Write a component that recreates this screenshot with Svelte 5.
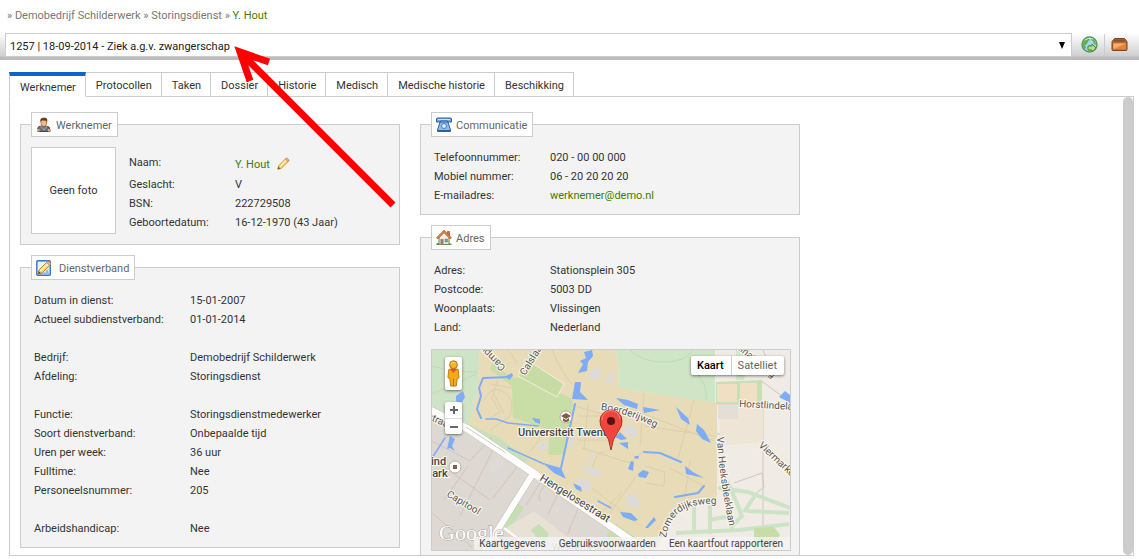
<script>
  let activeTab = $state('Werknemer');
  let mapType = $state('Kaart');
  let scale = $state(1);

  const tabs = ['Werknemer', 'Protocollen', 'Taken', 'Dossier', 'Historie', 'Medisch', 'Medische historie', 'Beschikking'];

  // null is an empty line between groups
  const employment = [
    ['Datum in dienst:', '15-01-2007'],
    ['Actueel subdienstverband:', '01-01-2014'],
    null,
    ['Bedrijf:', 'Demobedrijf Schilderwerk'],
    ['Afdeling:', 'Storingsdienst'],
    null,
    ['Functie:', 'Storingsdienstmedewerker'],
    ['Soort dienstverband:', 'Onbepaalde tijd'],
    ['Uren per week:', '36 uur'],
    ['Fulltime:', 'Nee'],
    ['Personeelsnummer:', '205'],
    null,
    ['Arbeidshandicap:', 'Nee']
  ];

  const address = [
    ['Adres:', 'Stationsplein 305'],
    ['Postcode:', '5003 DD'],
    ['Woonplaats:', 'Vlissingen'],
    ['Land:', 'Nederland']
  ];
</script>

{#snippet pencil()}
  <path d="M2 14l1-4L11 2q1-1 2 0l1 1q1 1 0 2L6 13z" fill="#fbd569" stroke="#c78a32" />
  <path d="M4.500 11L12 3.500" stroke="#fff3bd" stroke-width="1.500" />
  <path d="M10.500 2.500l3 3L14.500 4.500q.5-1-.5-2l-1-1q-1-.5-1.500 0z" fill="#f0a88c" stroke="#b98262" stroke-width=".7" />
  <path d="M2 14l.8-3 2.200 2.200z" fill="#6b4a2c" />
{/snippet}

<div class="page">
  <nav class="breadcrumb">
    » <a href="#bedrijf">Demobedrijf Schilderwerk</a> » <a href="#afdeling">Storingsdienst</a> » <a class="green" href="#werknemer">Y. Hout</a>
  </nav>

  <div class="toolbar">
    <div class="picker">
      <select aria-label="Verzuimdossier">
        <option>1257 | 18-09-2014 - Ziek a.g.v. zwangerschap</option>
      </select>
      <svg class="caret" width="6" height="7" viewBox="0 0 6 7"><path d="M0 0h6L3 7z" fill="#000" /></svg>
    </div>
    <button class="tool" aria-label="Openen">
      <svg width="18" height="18" viewBox="0 0 18 18">
        <circle cx="8.500" cy="8.500" r="7.500" fill="#a8d3ee" stroke="#529a50" stroke-width="1.400" />
        <path d="M2 7q2-5 6-5l1 2-2 1-1 3-2 1 1 3-1 1Q1 11 2 7zM10 2q5 2 5 7l-2-1-1-3-2-1zM7 10l3-1 1 3-2 3-2-1z" fill="#60ae54" />
        <path d="M4 4q4-3 8-1" stroke="#fff" stroke-opacity=".7" fill="none" />
        <path d="M7 10h4V8l4 4-4 4v-2H7z" fill="#b4dd84" stroke="#41883b" />
      </svg>
    </button>
    <button class="tool last" aria-label="Dossiermap">
      <svg width="18" height="16" viewBox="0 0 18 16">
        <path d="M3.500 1.500h10l2.500 3v8q0 1-1 1h-13q-1 0-1-1v-8z" fill="#ad6a3b" stroke="#7d4722" />
        <path d="M4 2.500h9l1.500 2h-12z" fill="#8c5128" />
        <path d="M2 6h13v6.500H2z" fill="#e5843b" />
        <path d="M2.500 6.500h12L2.500 12z" fill="#f6ae72" />
      </svg>
    </button>
  </div>

  <div class="tabs" role="tablist">
    {#each tabs as tab}
      <button role="tab" class:active={tab === activeTab} aria-selected={tab === activeTab} onclick={() => (activeTab = tab)}>{tab}</button>
    {/each}
  </div>

  <main class="content">
    <div class="columns">
      <div class="column">
        <fieldset>
          <legend>
            <svg width="16" height="16" viewBox="0 0 16 16">
              <path d="M1.500 13q0-4 3.500-4h5q4 0 4 4v1.500H1.500z" fill="#6e7178" stroke="#44474e" />
              <path d="M4.500 9l3.500 4 3-4" stroke="#a9adb5" fill="none" />
              <path d="M5 3.500h5.500V7q-.5 2.500-2.700 2.500T5 7z" fill="#f0b98a" stroke="#9c5c30" stroke-width=".7" />
              <path d="M4.500 5Q3.500 1 7 .7h2.500q2.500.8 1.500 4.800l-1-2-4-.5-1 1.500z" fill="#6a3a1d" />
              <path d="M1 12h2.500v2.500H1zM12 12h2.500v2.500H12z" fill="#e8a773" />
            </svg>
            <span>Werknemer</span>
          </legend>
          <div class="person">
            <div class="photo">Geen foto</div>
            <dl class="person-data">
              <div class="name-row">
                <dt>Naam:</dt>
                <dd>
                  <a class="green" href="#naam">Y. Hout</a>
                  <button class="edit" aria-label="Naam wijzigen">
                    <svg width="14" height="14" viewBox="0 0 16 16" fill="none">{@render pencil()}</svg>
                  </button>
                </dd>
              </div>
              <div><dt>Geslacht:</dt><dd>V</dd></div>
              <div><dt>BSN:</dt><dd>222729508</dd></div>
              <div><dt>Geboortedatum:</dt><dd>16-12-1970 (43 Jaar)</dd></div>
            </dl>
          </div>
        </fieldset>

        <fieldset>
          <legend>
            <svg width="16" height="16" viewBox="0 0 16 16" fill="none">
              <rect x=".8" y=".8" width="13.500" height="14.400" rx="1" fill="#cfe5fa" stroke="#3b77c5" stroke-width="1.400" />
              <path d="M2 2h11v4L5 14H2z" fill="#e9f4ff" />
              <path d="M5 13.500h8M11 10v3" stroke="#8fbdec" stroke-width="2" />
              {@render pencil()}
            </svg>
            <span class="wide">Dienstverband</span>
          </legend>
          <dl class="employment">
            {#each employment as row}
              {#if row}
                <div><dt>{row[0]}</dt><dd>{row[1]}</dd></div>
              {:else}
                <div class="blank"></div>
              {/if}
            {/each}
          </dl>
        </fieldset>
      </div>

      <div class="column">
        <fieldset>
          <legend>
            <svg width="16" height="16" viewBox="0 0 16 16">
              <path d="M.5 5V2q0-1 1-1h13q1 0 1 1v3h-4V4h-7v1z" fill="#74a7e3" stroke="#355f9f" />
              <path d="M4 5h8l2.500 8v1.500h-13V13z" fill="#8cb9ee" stroke="#355f9f" />
              <path d="M2 2.500h12" stroke="#cfe3fa" />
              <circle cx="8" cy="9" r="2.500" fill="#dcebfb" stroke="#4c7dbd" />
              <path d="M2 13.500h12" stroke="#365d96" />
            </svg>
            <span>Communicatie</span>
          </legend>
          <dl class="contact">
            <div><dt>Telefoonnummer:</dt><dd>020 - 00 00 000</dd></div>
            <div><dt>Mobiel nummer:</dt><dd>06 - 20 20 20 20</dd></div>
            <div><dt>E-mailadres:</dt><dd><a class="green" href="mailto:werknemer@demo.nl">werknemer@demo.nl</a></dd></div>
          </dl>
        </fieldset>

        <fieldset class="location">
          <legend>
            <svg width="16" height="16" viewBox="0 0 16 16">
              <path d="M3 7l5-5 5 5v7.500H3z" fill="#f2eee4" stroke="#847461" />
              <path d="M11.500 1.500h2V6l-2-2z" fill="#cd7046" stroke="#8c4425" stroke-width=".6" />
              <path d="M1 8.500L8 1.500l7 7" stroke="#b35c23" stroke-width="2.400" fill="none" />
              <path d="M1.500 8L8 1.500 14.500 8" stroke="#f2a95d" stroke-width="1" fill="none" />
              <path d="M4.500 9h3v6h-3z" fill="#8f8376" />
              <path d="M9 9h2.500v3H9z" fill="#79a5ce" stroke="#6b6b6b" stroke-width=".5" />
              <path d="M0 15q1-3 3-2l1 2zM9 15q1-2 3-1 3-2 4 1z" fill="#4fa33d" />
            </svg>
            <span>Adres</span>
          </legend>
          <dl class="contact">
            {#each address as [label, value]}
              <div><dt>{label}</dt><dd>{value}</dd></div>
            {/each}
          </dl>

          <div class="map">
            <svg class="tiles" class:satellite={mapType === 'Satelliet'} viewBox="0 0 358 200" preserveAspectRatio="xMidYMid slice" style:transform="scale({scale})">
              <rect width="358" height="200" fill="#f0ece5" />
              <path d="M0 0H48L45 45 36 79 0 61z" fill="#cfe3c7" />
              <path d="M0 16q20 6 46 6M0 44l44-20" stroke="#c1d9b8" fill="none" />
              <path d="M48 0H183Q188 14 186 38L285 53V150L253 154 238 166 226 198H210L100 123 36 78 45 45z" fill="#e8dcb8" />
              <path d="M183 0H283V53L186 38Q188 14 183 0z" fill="#cfe5c6" />
              <path d="M198 0q12 12 34 12t28-12M262 20q14 14 12 30" stroke="#bddbb5" fill="none" />
              <path d="M0 61L36 79 100 122 210 198V200H0z" fill="#ddd8d1" />
              <path d="M36 74L66 87 98 111 93 113 36 83z" fill="#c9dfb9" />
              <!-- campus greens -->
              <path d="M62 6L72 22 81 28 92 27 139 48 141 53 133 105H116L118 80 81 68 80 36 58 20z" fill="#c9dea7" />
              <path d="M92 14L100 13 132 34 125 47 86 26z" fill="#c6dca4" stroke="#f4eedc" />
              <path d="M175 184l9-10 26 18v8h-35z" fill="#c9dea7" />
              <path d="M92 158L76 181 71 178 86 153z" fill="#c5dfb3" />
              <path d="M72 179l30-18 40 31-4 8H96z" fill="#e8e1d6" />
              <path d="M99 180l8-6 10 10-4 7-8-3z" fill="#c5dfb3" />
              <!-- minor streets -->
              <g fill="none" stroke="#dccfa9" stroke-width="1">
                <path d="M52 50q8-16 20-8t6 24l-20 14M58 34l22 4M60 40l12 24M76 0l10 14M120 0q10 24 20 34M66 30l-6 18 8 14-10 6M96 104l14-18 6-4" />
                <path d="M140 55l46 14 18-8 78 30M212 43l-4 54M262 50l-16 58M146 66h26M145 90h36M156 54l-4 46M212 76l70 10M150 98l48 15 14-12M160 120q4-20 12-18M204 126l-32 46M213 116l20 6-1 14-18-3M258 110l-6 44M238 118l34 18M190 142l-20 20M148 128l60 48" />
              </g>
              <g fill="none" stroke="#cdc6be">
                <path d="M0 91l38 20 22-24M0 108l58 42M36 116l-24 34M62 98L28 166M72 104l16 9-28 36M110 130l-16 25M118 131q-14 10-10 20M130 136l-14 28M150 149l-14 34M0 163l40 34" />
                <path d="M285 84l38-3M331 58v142M302 133l28-10 2 14-10 8M328 30l30 22M331 0l10 24M285 54h73" />
              </g>
              <g fill="#dedad8">
                <path d="M194 73l12 6-4 11-10-8zM162 17l9 4-6 10-9-5zM180 21l4 2-6 12-5-3zM197 143l13 7-5 9-12-7zM105 95l8-4 3 5-5 7zM58 111l9-4 6 6-9 12-8-5zM147 127l14 6-4 8-13-6zM154 115l17 7-5 6-15-7zM137 88l5 1-1 8-5-1zM158 102h4l-1 10h-3zM124 156l5 1-1 6-5-1z" />
              </g>
              <!-- east side blocks -->
              <path d="M288 58h43v34l-43 4z" fill="#efe5d6" />
              <path d="M284 32l46-2v24h-46z" fill="#c6dfb5" />
              <path d="M285 34h20v18h-20zM308 33h17v19h-17z" fill="#f0dfc3" />
              <path d="M286 55h20v14h-20z" fill="#e4ded7" />
              <path d="M304 0h14l-6 30h-8z" fill="#d3e6c8" />
              <g fill="none" stroke="#cce3c6" stroke-width="4">
                <path d="M262 152v29M278 150v34M244 183l63-3 50-6M286 138l30 4 42 16M296 132l14 34-12 12M315 161l42 2M312 162l12-18M276 170l24-4" />
              </g>
              <path d="M322 178l20-1 6 8-6 15h-20z" fill="#c7dda8" />
              <!-- water -->
              <g fill="none" stroke="#7eacf6" stroke-linecap="round" stroke-linejoin="round">
                <path d="M78 27L51 28l-4 10 2 8-4 13 4 9" stroke-width="2" />
                <path d="M54 69l10 0 12 4 30 3M76 98l36 16M166 151l13 7M0 108l13-20" stroke-width="1.500" />
                <path d="M143 54l-14 64M212 102l16 1 21 9M243 147l23-4 6-7" stroke-width="2" />
              </g>
              <g fill="#7eacf6">
                <path d="M74 26l6-3 1 3-4 4zM152 2l8-2 1 6-5 6-1 9-9 2 5-9-3-3 6-3zM143 32l6 0-1 10 8 8-16-1zM24 46l7-5 2 6-4 7-5-3zM100 68l8 1 0 5-5-2zM18 86l5 3-3 7 3 5-5-3-3 1zM184 48l12 2 10 4-1 5-13-4zM211 57l17 3-16 3zM244 57l12 11 2 7-9-6zM265 74l7 6 7 13-9-4-6-8zM183 87l5-5 7 7-6 1zM187 93l9-1v7zM111 113l18 5 5 11-12-6zM141 133l8 4 1 5-6-3zM253 116l8 6 11 6-18-4zM206 124l5-4 6 2-3 6-7-1zM199 111l3 1-1 9-5-2zM203 106l4 0-1 3-4-1zM188 162l11 1 7 7-4 1-11-4zM213 178l9-11 2 3-8 8zM347 47l6-6 5 4v8z" />
              </g>
              <!-- main roads -->
              <g fill="none" stroke="#c5c1b7" stroke-linejoin="round">
                <path d="M-2 60L36 79 100 122 216 202" stroke-width="8" />
                <path d="M102 122L65 181 52 202" stroke-width="7" />
              </g>
              <g fill="none" stroke="#fff" stroke-linejoin="round">
                <path d="M-2 60L36 79 100 122 216 202" stroke-width="7" />
                <path d="M102 122L65 181 52 202" stroke-width="6" />
                <path d="M72 178l26 20" stroke-width="2" />
              </g>
              <path d="M34 77l40 26" stroke="#cdcac4" stroke-width="1" />
              <defs>
                <path id="boerderijweg" d="M169 60Q195 62 232 82" />
                <path id="zomerdijksweg" d="M234 188Q239 152 284 154" />
                <path id="heeksbleeklaan" d="M285 87Q287 130 299 184" />
              </defs>
              <g class="labels">
                <text transform="translate(74 17) rotate(-135)">Campus</text>
                <text transform="translate(93 26) rotate(-58)">Calslaan</text>
                <text text-anchor="end" transform="translate(18 79) rotate(24)">Auke Vleerstraat</text>
                <text><textPath href="#boerderijweg">Boerderijweg</textPath></text>
                <text transform="translate(14 146) rotate(31)">Capitool</text>
                <text class="main" transform="translate(107 130) rotate(32)">Hengelosestraat</text>
                <text><textPath href="#zomerdijksweg">Zomerdijksweg</textPath></text>
                <text><textPath href="#heeksbleeklaan">Van Heeksbleeklaan</textPath></text>
                <text transform="translate(307 57) rotate(3)">Horstlindelaan</text>
                <text transform="translate(326 96) rotate(43)">Viermarken</text>
                <text x="-22" transform="translate(309 2) rotate(40)">Destinatieweg</text>
                <text class="place" x="86" y="86">Universiteit Twente</text>
                <text class="place" x="-8" y="115">Kind</text>
                <text class="place" x="-6" y="127">park</text>
                <text class="faint" x="120" y="201">Westerbegraafplaats</text>
                <text class="google" x="7" y="190">Google</text>
              </g>
              <circle cx="134" cy="67" r="6" fill="#fff" stroke="#b9aa94" />
              <path d="M129 66l5-3 5 3-5 3zM131 68v3q3 2 6 0v-3l-3 2z" fill="#806044" />
              <circle cx="23" cy="117" r="6" fill="#fff" stroke="#b9b0a5" />
              <path d="M21 115h4v4h-4z" fill="#866044" />
              <path d="M179 100Q178 89 171 80 168 76 168 71A11 11 0 0 1 190 71Q190 76 187 80 180 89 179 100z" fill="#ee463d" stroke="#a92a24" />
              <path d="M170 70a9 9 0 0 1 18-1" stroke="#ff8a80" fill="none" />
              <circle cx="179" cy="71" r="4" fill="#5b120e" />
            </svg>

            <button class="map-box pegman" aria-label="Street View">
              <svg width="13" height="30" viewBox="0 0 14 30">
                <path d="M2 10q5-2 10 0l1 9-2 1-1 8H4l-1-8-2-1z" fill="#f5a914" stroke="#b87b0e" />
                <circle cx="7" cy="5" r="4.200" fill="#f7b327" stroke="#a86c0d" />
                <path d="M3.500 9.500h7L7 14z" fill="#e74b3a" />
                <path d="M7 20v8" stroke="#ae730c" />
                <path d="M4 4q2-3 5-1" stroke="#ffe07a" fill="none" />
              </svg>
            </button>
            <div class="map-box zoom">
              <button aria-label="Inzoomen" onclick={() => (scale = Math.min(3, scale + 1))}>
                <svg width="8" height="8" viewBox="0 0 8 8"><path d="M0 4h8M4 0v8" stroke="#666" stroke-width="2" /></svg>
              </button>
              <button aria-label="Uitzoomen" onclick={() => (scale = Math.max(1, scale - 1))}>
                <svg width="8" height="8" viewBox="0 0 8 8"><path d="M0 4h8" stroke="#666" stroke-width="2" /></svg>
              </button>
            </div>
            <div class="map-box types">
              {#each ['Kaart', 'Satelliet'] as type}
                <button class:chosen={type === mapType} onclick={() => (mapType = type)}>{type}</button>
              {/each}
            </div>
            <div class="credits">
              <a href="#gegevens">Kaartgegevens</a>
              <a href="#voorwaarden">Gebruiksvoorwaarden</a>
              <a href="#fout">Een kaartfout rapporteren</a>
            </div>
          </div>
        </fieldset>
      </div>
    </div>
    <div class="scrollbar"></div>
  </main>

  <svg class="pointer" width="164" height="164" viewBox="0 0 164 164">
    <path d="M8 8L159 159M35 16L6 6 16 35" fill="none" stroke="#f00" stroke-width="7" />
  </svg>
</div>

<style>
  :global(body) {
    background: #fff;
    color: #333;
    font: 11px/19px Tahoma, Roboto, sans-serif;
  }

  .page {
    position: relative;
    display: flex;
    flex-direction: column;
    height: 100vh;
    box-sizing: border-box;
    padding-bottom: 3px;
    overflow: hidden;
  }

  button,
  select {
    font: inherit;
    color: inherit;
  }

  button {
    margin: 0;
    padding: 0;
    border: 0;
    background: none;
    cursor: pointer;
  }

  svg {
    display: block;
    flex-shrink: 0;
  }

  a {
    color: inherit;
    text-decoration: none;
  }

  a.green {
    color: #3f7d00;
  }

  .breadcrumb {
    padding: 6px 7px 8px;
    color: #777;
  }

  .toolbar {
    display: flex;
    align-items: center;
    height: 24px;
    padding: 0 10px 3px 5px;
    background: linear-gradient(#fff, #cfcfd1 23px, #bcbcbc 24px, #bcbcbc);
  }

  .picker {
    position: relative;
    flex: 1;
    margin-right: 9px;
  }

  .picker select {
    display: block;
    width: 100%;
    height: 24px;
    padding: 2px 4px 0;
    border: 1px solid #ccc;
    border-radius: 0;
    background: #fff;
    color: #222;
    appearance: none;
  }

  .caret {
    position: absolute;
    top: 9px;
    right: 7px;
    pointer-events: none;
  }

  .tool {
    display: flex;
    align-items: center;
    height: 22px;
  }

  .tool.last {
    margin-left: 5px;
    padding-left: 6px;
    border-left: 1px solid #ccc;
  }

  .tabs {
    display: flex;
    padding: 12px 9px 0;
  }

  .tabs button {
    position: relative;
    z-index: 1;
    height: 25px;
    padding: 2px 9px 0 10px;
    border: solid #ccc;
    border-width: 1px 1px 1px 0;
  }

  .tabs button.active {
    border-top: 4px solid #0a66cc;
    border-left-width: 1px;
    border-bottom-color: #fff;
  }

  .content {
    position: relative;
    flex: 1;
    min-height: 0;
    margin: -1px 5px 0 9px;
    border: 1px solid #ccc;
    overflow: hidden;
  }

  .columns {
    display: flex;
    gap: 20px;
    padding: 15px 20px 0 10px;
  }

  .column {
    display: flex;
    flex-direction: column;
    gap: 10px;
    flex: 0 1 380px;
    min-width: 0;
  }

  fieldset {
    min-width: 0;
    margin: 0;
    padding: 11px 10px 9px;
    border: 1px solid #ccc;
    background: #f3f3f3;
  }

  .location {
    padding-right: 8px;
  }

  legend {
    display: flex;
    align-items: center;
    box-sizing: border-box;
    height: 25px;
    padding: 0 5px 0 4px;
    border: 1px solid #ccc;
    background: #fff;
    color: #666;
  }

  legend span {
    margin-left: 4px;
    line-height: 21px;
    padding-top: 2px;
  }

  legend span.wide {
    margin-left: 7px;
  }

  dl,
  dd {
    margin: 0;
  }

  dl > div {
    display: flex;
  }

  .blank {
    height: 19px;
  }

  .person {
    display: flex;
    gap: 13px;
    margin: -1px 0 1px;
  }

  .photo {
    display: flex;
    align-items: center;
    justify-content: center;
    width: 83px;
    height: 85px;
    border: 1px solid #ccc;
    background: #fff;
  }

  .person-data {
    padding-top: 6px;
  }

  .person-data dt {
    width: 106px;
  }

  .name-row dd {
    display: flex;
    align-items: center;
    height: 22px;
  }

  .edit {
    margin-left: 6px;
  }

  .employment {
    padding: 0 3px;
  }

  .employment dt {
    width: 156px;
  }

  .contact {
    padding: 0 3px;
  }

  .contact dt {
    width: 116px;
  }

  .map {
    position: relative;
    height: 200px;
    margin-top: 12px;
    border: 1px solid #ccc;
    overflow: hidden;
    font: 11px/18px Roboto, sans-serif;
  }

  .tiles {
    width: 100%;
    height: 100%;
  }

  .tiles.satellite {
    filter: saturate(.6) brightness(.6);
  }

  .labels text {
    fill: #5a5650;
    stroke: #fbf8f1;
    stroke-width: 2px;
    paint-order: stroke;
    font-size: 10px;
  }

  .labels .main {
    fill: #444;
    font-size: 11px;
  }

  .labels .place {
    fill: #444;
    font-size: 11px;
    font-weight: 500;
  }

  .labels .faint {
    fill: #999;
  }

  .labels .google {
    fill: #fff;
    stroke: #aaa49c;
    stroke-width: 1px;
    font: 22px "Liberation Serif", serif;
  }

  .map-box {
    position: absolute;
    border-radius: 2px;
    background: #fff;
    box-shadow: 0 1px 3px rgba(0, 0, 0, .5);
  }

  .pegman,
  .zoom {
    left: 13px;
    width: 17px;
  }

  .pegman {
    top: 7px;
    height: 33px;
    padding: 1px 2px;
  }

  .zoom {
    top: 52px;
  }

  .zoom button {
    display: flex;
    align-items: center;
    justify-content: center;
    width: 100%;
    height: 16px;
  }

  .zoom button + button {
    border-top: 1px solid #ddd;
  }

  .types {
    top: 6px;
    right: 6px;
    display: flex;
  }

  .types button {
    padding: 1px 7px 0 6px;
    color: #666;
  }

  .types button + button {
    border-left: 1px solid #ccc;
  }

  .types button.chosen {
    color: #000;
    font-weight: 500;
  }

  .credits {
    position: absolute;
    right: 0;
    bottom: 0;
    display: flex;
    gap: 13px;
    padding: 0 7px 0 5px;
    background: rgba(245, 245, 245, .75);
    color: #444;
    font-size: 10px;
    line-height: 13px;
  }

  .scrollbar {
    position: absolute;
    top: 0;
    right: 0;
    bottom: 0;
    width: 10px;
    border-radius: 5px;
    background: #ccc;
  }

  .pointer {
    position: absolute;
    z-index: 2;
    top: 46px;
    left: 234px;
    pointer-events: none;
  }
</style>
